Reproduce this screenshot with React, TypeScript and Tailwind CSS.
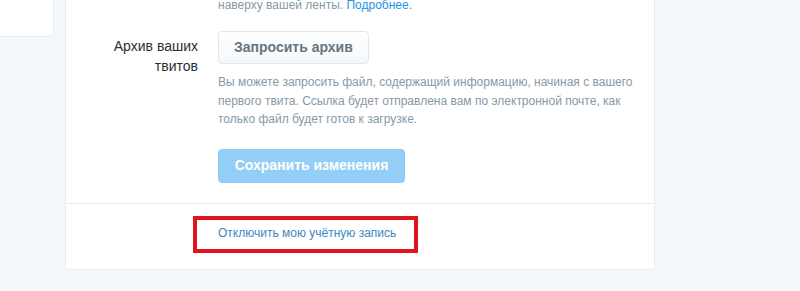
import React from "react";

const font = { fontFamily: '"Liberation Sans", Arial, sans-serif' };

export default function App() {
  return (
    <div
      className="h-[291px] w-[800px] overflow-hidden bg-[#f5f8fa] flex items-start"
      style={font}
    >
      {/* side card (cut off at the top) */}
      <div className="w-[54px] h-[37px] shrink-0 bg-white border-r border-b border-[#e6ecf0] rounded-br-[5px]" />

      {/* settings card */}
      <div className="ml-[11px] w-[590px] shrink-0 bg-white border border-t-0 border-[#e6ecf0] rounded-b-[5px]">
        <div className="pb-[20px]">
          <div className="flex -mt-[4px]">
            <div className="w-[132px] shrink-0" />
            <p className="ml-[20px] text-[12px] leading-[18px] text-[#8899a6]">
              наверху вашей ленты.{" "}
              <a className="text-[#1b95e0]" href="#">
                Подробнее.
              </a>
            </p>
          </div>

          <div className="flex mt-[17px]">
            <label className="w-[132px] shrink-0 pt-[5px] text-right text-[14px] leading-[20px] text-[#292f33]">
              Архив ваших
              <br />
              твитов
            </label>
            <div className="ml-[20px] w-[425px]">
              <button className="h-[33px] px-[15px] rounded-[4px] border border-[#e1e8ed] bg-gradient-to-b from-white to-[#f5f8fa] text-[14px] font-bold text-[#66757f]">
                Запросить архив
              </button>
              <p className="mt-[9px] text-[12px] leading-[18.5px] text-[#8899a6]">
                Вы можете запросить файл, содержащий информацию, начиная с вашего
                первого твита. Ссылка будет отправлена вам по электронной почте, как
                только файл будет готов к загрузке.
              </p>
              <button className="mt-[20px] h-[34px] w-[187px] rounded-[4px] border border-[#8ecaf3] bg-[#93cef6] text-[14px] font-bold text-white">
                Сохранить изменения
              </button>
            </div>
          </div>
        </div>

        <div className="border-t border-[#e6ecf0] pt-[20px] pb-[27px] pl-[152px] flex">
          <div className="relative">
            <a href="#" className="block text-[12px] leading-[18px] text-[#3b88c3]">
              Отключить мою учётную запись
            </a>
            <div className="absolute -left-[25px] -right-[22px] -top-[8px] -bottom-[11px] border-[4px] border-[#e0141e]" />
          </div>
        </div>
      </div>
    </div>
  );
}
